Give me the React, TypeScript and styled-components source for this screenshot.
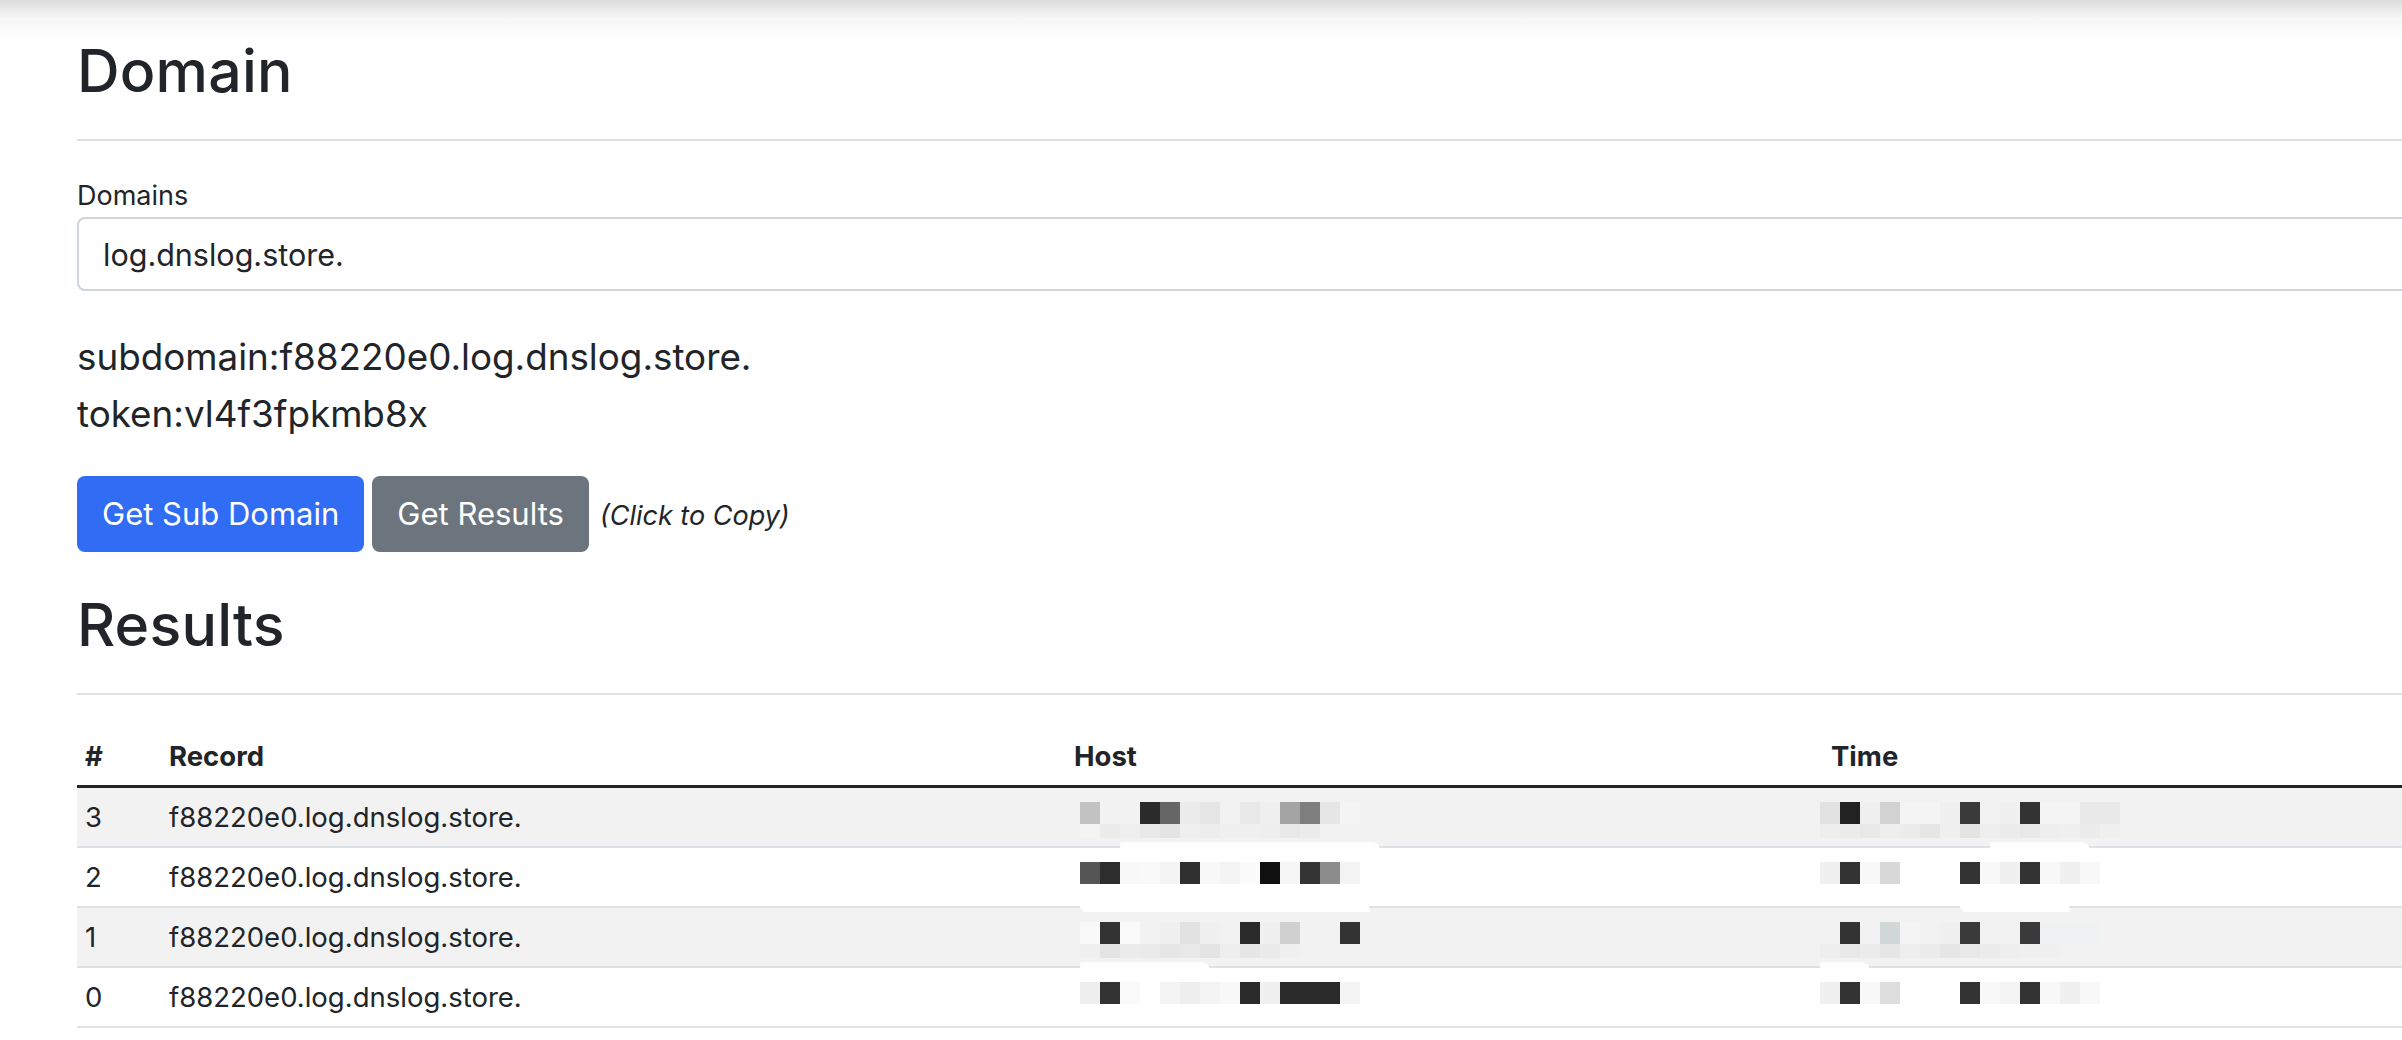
import React from "react";
import styled, { createGlobalStyle } from "styled-components";

const GlobalStyle = createGlobalStyle`
  html, body {
    margin: 0;
    overflow: hidden;
  }
  body {
    font-family: Inter, "Liberation Sans", sans-serif;
    color: #212529;
    background: linear-gradient(#dcdcdc 0, #f6f6f6 18px, #ffffff 40px) no-repeat, #ffffff;
  }
`;

// host / time values are pixelated in the screenshot, so they are drawn as cells
const hostCells = [
  {
    top: ["#c2c2c2", "#f2f2f2", "#f2f2f2", "#2b2b2b", "#666666", "#ececec", "#e6e6e6", "#f2f2f2", "#e8e8e8", "#f0f0f0", "#a4a4a4", "#7e7e7e", "#e6e6e6", "#f4f4f4"],
    bottom: ["#f4f4f4", "#ececec", "#efefef", "#e9e9e9", "#e4e4e4", "#efefef", "#ededed", "#f0f0f0", "#f0f0f0", "#eeeeee", "#e8e8e8", "#ececec", "#f2f2f2", "#f2f2f2"],
  },
  {
    top: ["#555555", "#2d2d2d", "#f8f8f8", "#f9f9f9", "#f4f4f4", "#303030", "#f8f8f8", "#f4f4f4", "#fbfbfb", "#111111", "#f6f6f6", "#343434", "#8c8c8c", "#f4f4f4"],
    bottom: [],
  },
  {
    top: ["#f9f9f9", "#333333", "#fafafa", "#f2f2f2", "#f0f0f0", "#e2e2e2", "#f0f0f0", "#f2f2f2", "#2a2a2a", "#f0f0f0", "#d0d0d0", "#f2f2f2", "#f2f2f2", "#333333"],
    bottom: ["#f0f0f0", "#e4e4e4", "#ececec", "#eaeaea", "#e6e6e6", "#e8e8e8", "#e4e4e4", "#eeeeee", "#e6e6e6", "#eaeaea", "#f0f0f0", "#f2f2f2", "#f2f2f2", "#f2f2f2"],
  },
  {
    top: ["#eeeeee", "#333333", "#fafafa", "#ffffff", "#f4f4f4", "#eeeeee", "#f4f4f4", "#f8f8f8", "#2a2a2a", "#f0f0f0", "#2a2a2a", "#2a2a2a", "#2a2a2a", "#f4f4f4"],
    bottom: [],
  },
];

const timeCells = [
  {
    top: ["#e2e2e2", "#222222", "#f0f0f0", "#d2d2d2", "#f4f4f4", "#f4f4f4", "#f0f0f0", "#3a3a3a", "#f2f2f2", "#f0f0f0", "#333333", "#f4f4f4", "#f4f4f4", "#e8e8e8", "#e8e8e8"],
    bottom: ["#eeeeee", "#ececec", "#e8e8e8", "#eeeeee", "#ececec", "#e6e6e6", "#f0f0f0", "#e4e4e4", "#eeeeee", "#ececec", "#e8e8e8", "#eeeeee", "#f0f0f0", "#ececec", "#f0f0f0"],
  },
  {
    top: ["#f0f0f0", "#333333", "#f8f8f8", "#d8d8d8", "#ffffff", "#ffffff", "#ffffff", "#333333", "#f8f8f8", "#f0f0f0", "#333333", "#f8f8f8", "#f0f0f0", "#f8f8f8", "#ffffff"],
    bottom: [],
  },
  {
    top: ["#f2f2f2", "#333333", "#f2f2f2", "#d0d8d8", "#f4f4f4", "#f2f2f2", "#f0f0f0", "#3a3a3a", "#f2f2f2", "#f2f2f2", "#3a3a3a", "#eef2f2", "#eef2f2", "#eef2f2", "#f2f2f2"],
    bottom: ["#eeeeee", "#e8e8e8", "#ececec", "#e6e6e6", "#eeeeee", "#ececec", "#e6e6e6", "#e8e8e8", "#ececec", "#eeeeee", "#f0f0f0", "#f0f0f0", "#f2f2f2", "#f2f2f2", "#f2f2f2"],
  },
  {
    top: ["#f0f0f0", "#333333", "#f8f8f8", "#dddddd", "#ffffff", "#ffffff", "#ffffff", "#333333", "#f8f8f8", "#f4f4f4", "#333333", "#f8f8f8", "#f0f0f0", "#f8f8f8", "#ffffff"],
    bottom: [],
  },
];

// white paint smears left over the row borders by the redaction
const hostSmudges = [
  { left: 40, width: 260 },
  { left: 0, width: 290 },
  { left: 0, width: 130 },
  null,
];
const timeSmudges = [
  { left: 170, width: 100 },
  { left: 140, width: 110 },
  { left: 0, width: 50 },
  null,
];

const records = [3, 2, 1, 0];

type Cells = { top: string[]; bottom: string[] };
type Smear = { left: number; width: number } | null;

function Mosaic({ cells, offset, smear }: { cells: Cells; offset: number; smear: Smear }) {
  return (
    <MosaicGrid $offset={offset} $count={cells.top.length}>
      {cells.top.map((c, i) => (
        <Cell key={"t" + i} style={{ background: c }} />
      ))}
      {cells.bottom.map((c, i) => (
        <Cell key={"b" + i} style={{ background: c }} />
      ))}
      {smear && <Smudge style={{ left: smear.left, width: smear.width }} />}
    </MosaicGrid>
  );
}

export default function App() {
  return (
    <Page>
      <GlobalStyle />
      <Title>Domain</Title>
      <Rule />
      <Label>Domains</Label>
      <Input defaultValue="log.dnslog.store." />
      <Info>
        <Line>subdomain:f88220e0.log.dnslog.store.</Line>
        <Line>token:vl4f3fpkmb8x</Line>
      </Info>
      <Actions>
        <Button $variant="primary">Get Sub Domain</Button>
        <Button $variant="secondary">Get Results</Button>
        <Hint>(Click to Copy)</Hint>
      </Actions>
      <Title $top={38}>Results</Title>
      <Rule />
      <Table>
        <colgroup>
          <col style={{ width: 84 }} />
          <col style={{ width: 905 }} />
          <col style={{ width: 757 }} />
          <col />
        </colgroup>
        <thead>
          <tr>
            <Th>#</Th>
            <Th>Record</Th>
            <Th>Host</Th>
            <Th>Time</Th>
          </tr>
        </thead>
        <tbody>
          {records.map((n, i) => (
            <Row key={n} $striped={i % 2 === 0}>
              <Td>{n}</Td>
              <Td>f88220e0.log.dnslog.store.</Td>
              <Td>
                <Mosaic cells={hostCells[i]} offset={6} smear={hostSmudges[i]} />
              </Td>
              <Td>
                <Mosaic cells={timeCells[i]} offset={-11} smear={timeSmudges[i]} />
              </Td>
            </Row>
          ))}
        </tbody>
      </Table>
    </Page>
  );
}

const Page = styled.div`
  padding-left: 77px;
  width: 2560px;
  box-sizing: border-box;
  padding-top: 36px;
`;

const Title = styled.h1<{ $top?: number }>`
  margin: ${(p) => p.$top ?? 0}px 0 0;
  font-size: 59px;
  font-weight: 500;
  line-height: 1.2;
  letter-spacing: 0.2px;
`;

const Rule = styled.hr`
  margin: 32px 0 0;
  border: 0;
  border-top: 2px solid #dee2e6;
`;

const Label = styled.label`
  display: block;
  margin-top: 35px;
  font-size: 27px;
  line-height: 1.5;
`;

const Input = styled.input`
  display: block;
  box-sizing: border-box;
  width: 100%;
  height: 74px;
  margin-top: 1px;
  padding: 0 24px;
  border: 2px solid #ced4da;
  border-radius: 8px;
  font-family: Inter, "Liberation Sans", sans-serif;
  font-size: 30.5px;
  color: #212529;
  outline: none;
`;

const Info = styled.div`
  margin-top: 37px;
`;

const Line = styled.div`
  font-size: 36.8px;
  line-height: 57px;
`;

const Actions = styled.div`
  display: flex;
  align-items: baseline;
  margin-top: 34px;
`;

const Button = styled.button<{ $variant: "primary" | "secondary" }>`
  height: 76px;
  padding: 0 23px;
  margin-right: 8px;
  border: 2px solid transparent;
  border-radius: 8px;
  font-family: Inter, "Liberation Sans", sans-serif;
  font-size: 31px;
  line-height: 1.5;
  color: #ffffff;
  background: ${(p) => (p.$variant === "primary" ? "#316cf4" : "#6c757d")};
`;

const Hint = styled.i`
  margin-left: 3px;
  font-size: 27px;
`;

const Table = styled.table`
  width: 100%;
  margin-top: 32px;
  border-collapse: collapse;
  table-layout: fixed;
  font-size: 27.5px;
  line-height: 42px;
`;

const Th = styled.th`
  padding: 8px;
  text-align: left;
  font-weight: 700;
  border-bottom: 3px solid #212529;
`;

const Row = styled.tr<{ $striped: boolean }>`
  background: ${(p) => (p.$striped ? "#f2f2f2" : "#ffffff")};
  border-bottom: 2px solid #dee2e6;
`;

const Td = styled.td`
  padding: 8px;
  height: 42px;
  vertical-align: top;
  white-space: nowrap;
`;

const MosaicGrid = styled.div<{ $offset: number; $count: number }>`
  position: relative;
  display: grid;
  grid-template-columns: repeat(${(p) => p.$count}, 20px);
  grid-template-rows: 22px 14px;
  margin-top: 6px;
  margin-left: ${(p) => p.$offset}px;
  height: 36px;
`;

const Cell = styled.div``;

const Smudge = styled.div`
  position: absolute;
  top: 40px;
  height: 10px;
  background: #ffffff;
  border-radius: 10px 40px 6px 30px;
`;
